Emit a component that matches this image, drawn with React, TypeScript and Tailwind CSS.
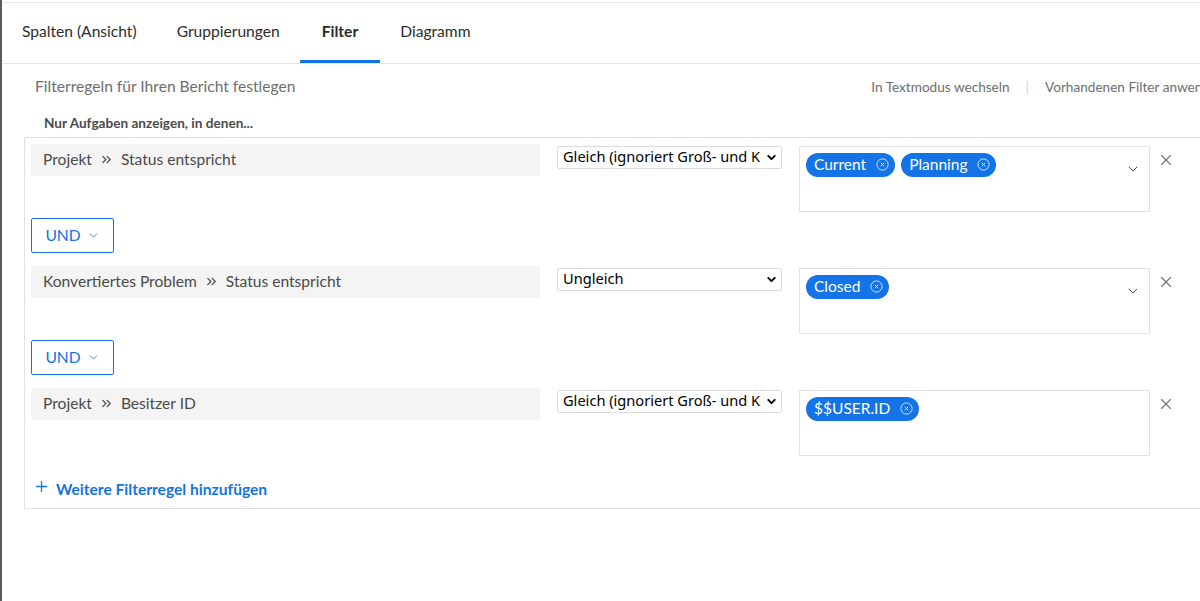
import { ChevronDown, ChevronsRight, X, Plus } from "lucide-react";

type Rule = {
  path: string[];
  operator: string;
  values: string[];
};

const rules: Rule[] = [
  {
    path: ["Projekt", "Status entspricht"],
    operator: "Gleich (ignoriert Groß- und Kleinschreibung)",
    values: ["Current", "Planning"],
  },
  {
    path: ["Konvertiertes Problem", "Status entspricht"],
    operator: "Ungleich",
    values: ["Closed"],
  },
  {
    path: ["Projekt", "Besitzer ID"],
    operator: "Gleich (ignoriert Groß- und Kleinschreibung)",
    values: ["$$USER.ID"],
  },
];

const tabs = ["Spalten (Ansicht)", "Gruppierungen", "Filter", "Diagramm"];

const TagRemove = () => (
  <svg width="13" height="13" viewBox="0 0 13 13" className="shrink-0 opacity-80">
    <circle cx="6.5" cy="6.5" r="5.6" fill="none" stroke="white" strokeWidth="1" />
    <path d="M4.8 4.8 L8.2 8.2 M8.2 4.8 L4.8 8.2" stroke="white" strokeWidth="1" />
  </svg>
);

const Tag = ({ label }: { label: string }) => (
  <span className="flex h-6 items-center gap-[10px] rounded-full bg-[#1473e6] pl-2 pr-[6px] text-[15.5px] text-white">
    {label}
    <TagRemove />
  </span>
);

const RuleRow = ({ rule }: { rule: Rule }) => (
  <div className="flex items-start">
    <div className="flex h-8 w-[509px] items-center rounded-[2px] bg-[#f4f4f4] pl-3 text-[15.6px] text-[#4b4b4b]">
      <span>{rule.path[0]}</span>
      <ChevronsRight size={15} strokeWidth={2} className="mx-[7px] text-[#4b4b4b]" />
      <span>{rule.path[1]}</span>
    </div>
    <div className="ml-[17px] mt-[2px] flex h-[23px] w-[225px] items-center rounded-[2px] border border-[#dcdcdc] pl-[5px] pr-[3px] font-['Noto_Sans',sans-serif] text-[14.6px] text-black">
      <span className="flex-1 overflow-hidden whitespace-nowrap">{rule.operator}</span>
      <ChevronDown size={13} strokeWidth={3.5} className="ml-1 shrink-0" />
    </div>
    <div className="ml-[17px] mt-[2px] flex h-[66px] w-[351px] items-start rounded-[1px] border border-[#e1e1e1] pl-[6px] pr-[8px] pt-[6px]">
      <div className="flex flex-1 flex-wrap gap-[6px]">
        {rule.values.map((v) => (
          <Tag key={v} label={v} />
        ))}
      </div>
      {rule.values.length > 1 || rule.operator === "Ungleich" ? (
        <ChevronDown size={16} strokeWidth={1.4} className="mt-[8px] text-[#444]" />
      ) : null}
    </div>
    <button className="ml-[7px] mt-[7px] text-[#6e6e6e]">
      <X size={18} strokeWidth={1.5} />
    </button>
  </div>
);

const AndButton = () => (
  <button className="my-[6px] flex h-[35px] w-[83px] items-center justify-center gap-[6px] rounded-[2px] border border-[#1473e6] text-[15.6px] text-[#1473e6]">
    UND
    <ChevronDown size={13} strokeWidth={1.5} />
  </button>
);

export default function App() {
  return (
    <div className="h-[601px] w-[1200px] overflow-hidden border-l-2 border-[#5b5b5b] bg-white pt-[2px] font-['Lato',sans-serif]">
      <div className="flex h-[62px] items-stretch border-y border-[#e6e6e6] pl-0">
        {tabs.map((t) => (
          <div
            key={t}
            className={`flex items-center border-b-[3px] px-5 pt-[1px] text-[15.6px] text-[#2c2c2c] ${
              t === "Filter" ? "border-[#1473e6] px-[22px] font-bold" : "border-transparent"
            }`}
          >
            {t}
          </div>
        ))}
      </div>

      <div className="flex items-center justify-between pl-[33px] pt-[11px]">
        <span className="text-[15.6px] text-[#6e6e6e]">Filterregeln für Ihren Bericht festlegen</span>
        <div className="flex items-center whitespace-nowrap text-[13.6px] text-[#6e6e6e]">
          <span>In Textmodus wechseln</span>
          <span className="mx-4 text-[#cfcfcf]">|</span>
          <span className="w-[155px] overflow-hidden">Vorhandenen Filter anwenden</span>
        </div>
      </div>

      <div className="pl-[42px] pt-[15px] text-[13.6px] font-bold text-[#4b4b4b]">
        Nur Aufgaben anzeigen, in denen...
      </div>

      <div className="ml-[22px] mt-[3px] w-[1200px] border border-[#e1e1e1] pb-[7px] pl-[6px] pt-[6px]">
        <RuleRow rule={rules[0]} />
        <AndButton />
        <div className="pt-[7px]">
          <RuleRow rule={rules[1]} />
        </div>
        <AndButton />
        <div className="pt-[7px]">
          <RuleRow rule={rules[2]} />
        </div>
        <div className="mt-[22px] flex items-center gap-[6px] pl-[2px] text-[15.6px] font-bold text-[#1473e6]">
          <Plus size={17} strokeWidth={1.8} className="-mt-[5px]" />
          <span>Weitere Filterregel hinzufügen</span>
        </div>
      </div>
    </div>
  );
}
